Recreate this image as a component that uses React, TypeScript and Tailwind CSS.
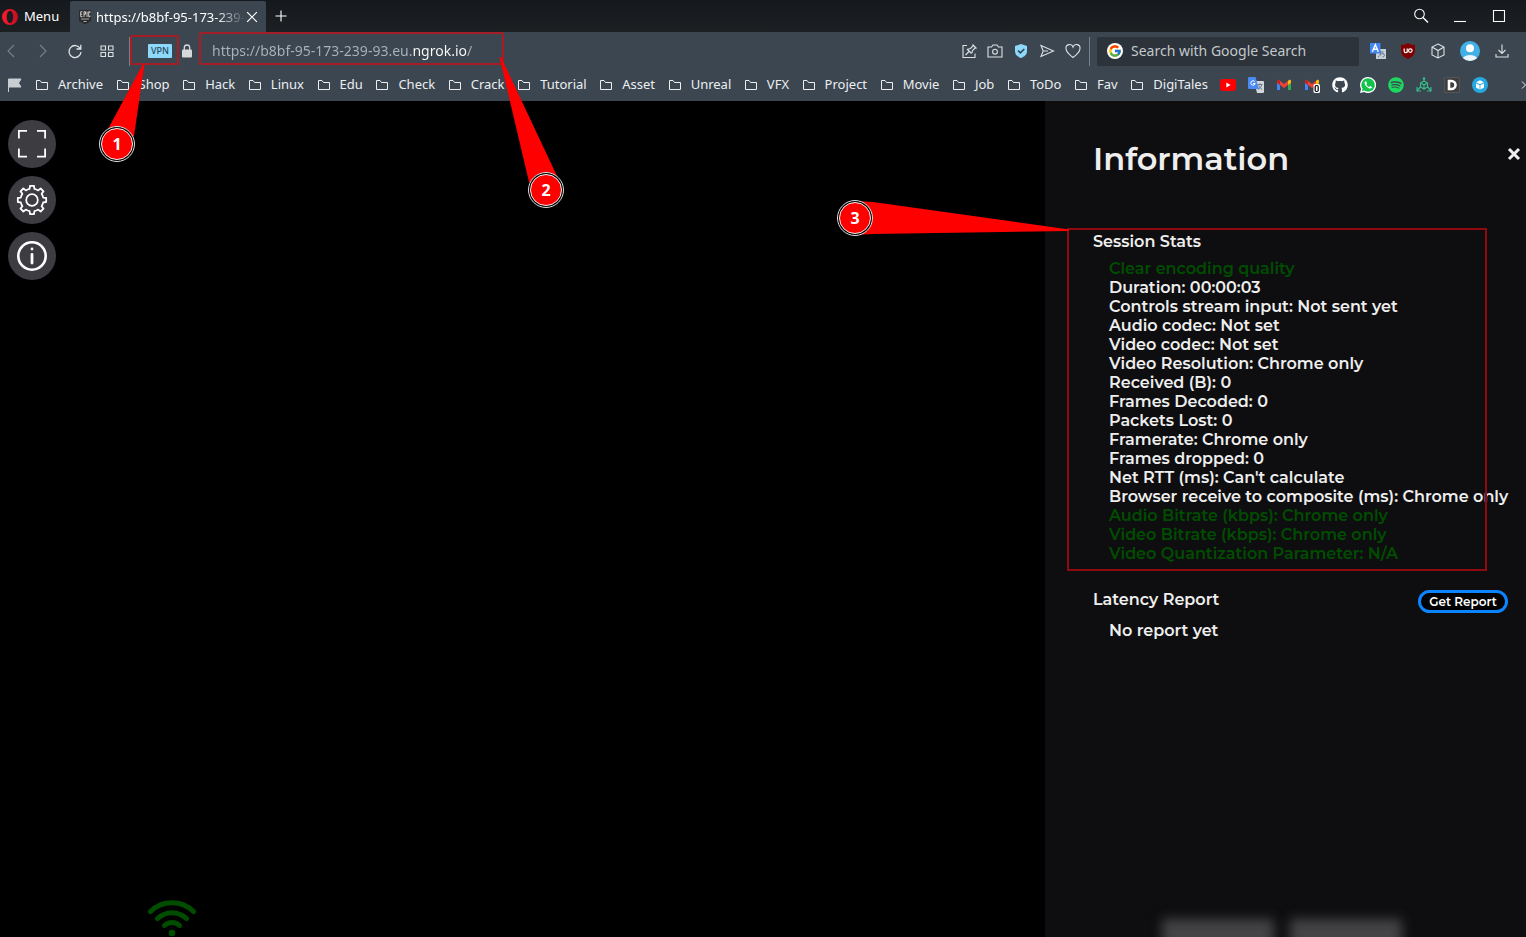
import type { ReactNode } from "react";
import { FcGoogle } from "react-icons/fc";
import { FaGithub, FaSpotify, FaWhatsapp } from "react-icons/fa";

const folders = [
  "Archive", "Shop", "Hack", "Linux", "Edu", "Check", "Crack", "Tutorial", "Asset",
  "Unreal", "VFX", "Project", "Movie", "Job", "ToDo", "Fav", "DigiTales",
];

const stats = [
  { text: "Clear encoding quality", good: true },
  { text: "Duration: 00:00:03" },
  { text: "Controls stream input: Not sent yet" },
  { text: "Audio codec: Not set" },
  { text: "Video codec: Not set" },
  { text: "Video Resolution: Chrome only" },
  { text: "Received (B): 0" },
  { text: "Frames Decoded: 0" },
  { text: "Packets Lost: 0" },
  { text: "Framerate: Chrome only" },
  { text: "Frames dropped: 0" },
  { text: "Net RTT (ms): Can't calculate" },
  { text: "Browser receive to composite (ms): Chrome only" },
  { text: "Audio Bitrate (kbps): Chrome only", good: true },
  { text: "Video Bitrate (kbps): Chrome only", good: true },
  { text: "Video Quantization Parameter: N/A", good: true },
];

function Icon({ children, className = "size-4" }: { children: ReactNode; className?: string }) {
  return (
    <svg viewBox="0 0 16 16" fill="none" stroke="currentColor" strokeWidth="1.1" className={className} aria-hidden="true">
      {children}
    </svg>
  );
}

function IconButton({ label, children, className = "size-4" }: { label: string; children: ReactNode; className?: string }) {
  return (
    <button type="button" aria-label={label} className={`flex shrink-0 items-center justify-center ${className}`}>
      {children}
    </button>
  );
}

function Gmail({ badge = false }: { badge?: boolean }) {
  return (
    <svg viewBox="0 0 16 16" className="size-4" aria-hidden="true">
      <path d="M1 4v9h3V7z" fill="#4285f4" />
      <path d="M15 4v9h-3V7z" fill="#34a853" />
      <path d="M1 3.8 2.6 2.8 8 7l5.400-4.200L15 3.800V5.700L8 11 1 5.700z" fill="#ea4335" />
      <path d="M12 4 13.400 2.800Q15 2.500 15 4.200V5.700L12 8z" fill="#fbbc04" />
      <path d="M4 4 2.600 2.800Q1 2.500 1 4.200V5.700L4 8z" fill="#c5221f" />
      {badge && (
        <g>
          <rect x="9.500" y="7" width="6.500" height="9" rx="1.500" fill="#fff" />
          <rect x="11.200" y="8.500" width="3" height="6" rx="1.200" fill="none" stroke="#000" strokeWidth="1.200" />
        </g>
      )}
    </svg>
  );
}

const shortcuts: { label: string; icon: ReactNode }[] = [
  {
    label: "YouTube",
    icon: (
      <svg viewBox="0 0 16 16" className="size-4" aria-hidden="true">
        <rect y="2" width="16" height="12" rx="3" fill="#f00" />
        <path d="m6.300 5.400 4.300 2.600-4.300 2.600z" fill="#fff" />
      </svg>
    ),
  },
  {
    label: "Translate",
    icon: (
      <svg viewBox="0 0 16 16" className="size-4" aria-hidden="true">
        <path d="M6 4h9a1 1 0 0 1 1 1v10a1 1 0 0 1-1 1H9z" fill="#d3d6da" />
        <path d="M9.500 7.500h5M12 6.300v1.200M13.800 7.500c-.5 2.300-2 4-3.500 5M10.800 8.500c.5 1.800 2 3.200 3.600 4" stroke="#687886" fill="none" />
        <path d="M1 0h6.500L11 12H1a1 1 0 0 1-1-1V1a1 1 0 0 1 1-1z" fill="#4a8af4" />
        <path d="M6.700 4.500a2.200 2.200 0 1 0 .5 2H5" stroke="#fff" fill="none" />
      </svg>
    ),
  },
  { label: "Gmail", icon: <Gmail /> },
  { label: "Gmail inbox", icon: <Gmail badge /> },
  { label: "GitHub", icon: <FaGithub className="size-4 text-white" /> },
  {
    label: "WhatsApp",
    icon: (
      <svg viewBox="0 0 16 16" className="size-4" aria-hidden="true">
        <path d="M8 0a8 8 0 1 1-3.800 15L0 16l1.100-4A8 8 0 0 1 8 0z" fill="#fff" />
        <path d="M8 1.300A6.700 6.700 0 1 1 4.400 13.600L1.900 14.200l.7-2.400A6.700 6.700 0 0 1 8 1.300z" fill="#12c24a" />
        <path d="M5.500 4.200c-1.800 1-.6 3.700 1 5.300s4.200 3 5.400 1.300l.1-.9-1.900-1-1 1.100c-1.300-.5-2.200-1.400-2.800-2.600l.7-.9-.8-2.200z" fill="#fff" />
      </svg>
    ),
  },
  { label: "Spotify", icon: <FaSpotify className="size-4 text-[#1ed760]" /> },
  {
    label: "Network",
    icon: (
      <Icon className="size-4 text-[#35c08d]">
        <path d="m8 4 3.500 2v4L8 12l-3.500-2V6zM4.500 6 8 8l3.500-2M8 8v4M8 4V1.500M4.500 10 1.500 13M11.500 10l3 3M1 10v4h4M15 10v4h-4" />
        <circle cx="8" cy="1.500" r=".8" fill="currentColor" />
      </Icon>
    ),
  },
  {
    label: "Dictionary",
    icon: (
      <svg viewBox="0 0 16 16" className="size-4" aria-hidden="true">
        <rect width="16" height="16" rx="1.500" fill="#555" />
        <rect x="1" y="1" width="14" height="14" fill="#3f3f3f" />
        <path d="M5 4h2.500a4 4 0 0 1 0 8H5z" fill="none" stroke="#fff" strokeWidth="2.600" />
      </svg>
    ),
  },
  {
    label: "Cube",
    icon: (
      <svg viewBox="0 0 16 16" className="size-4" aria-hidden="true">
        <circle cx="8" cy="8" r="8" fill="#27a9e0" />
        <path d="m8 3.300 3.800 2L8 7.300l-3.800-2zM4 6.200l3.600 2v4.300L4 10.500zM12 6.200l-3.600 2v4.300l3.600-2z" fill="#fff" />
      </svg>
    ),
  },
];

function Marker({ label, className }: { label: string; className: string }) {
  return (
    <span className={`absolute flex size-9 items-center justify-center rounded-full border border-[#ddd] bg-black p-px ${className}`}>
      <span className="flex size-full items-center justify-center rounded-full border border-[#eee] bg-[#f00] text-base font-bold text-white">
        {label}
      </span>
    </span>
  );
}

function TabStrip() {
  return (
    <header className="flex h-8 items-end bg-linear-to-b from-[#15181c] to-[#1d2023] text-[13px] text-white">
      <button type="button" className="flex h-8 w-[70px] shrink-0 items-center gap-1.5 pt-0.5 pl-0.5">
        <svg viewBox="0 0 16 16" className="size-4 shrink-0" aria-hidden="true">
          <defs>
            <linearGradient id="ring" x1="0" x2="1">
              <stop offset="0" stopColor="#ff1b2d" />
              <stop offset="1" stopColor="#c00d20" />
            </linearGradient>
          </defs>
          <path fillRule="evenodd" d="M8 0a8 8 0 1 0 0 16A8 8 0 0 0 8 0zM8 2c2 0 3.200 2.700 3.200 6S10 14 8 14s-3.200-2.700-3.200-6S6 2 8 2z" fill="url(#ring)" />
        </svg>
        Menu
      </button>
      <div className="flex h-[31px] w-[196px] shrink-0 items-center rounded-t-xs bg-[#3b4650] px-2">
        <svg viewBox="0 0 14 16" className="h-4 w-3.5 shrink-0" aria-hidden="true">
          <path d="M1 1h12v11l-6 3.500L1 12z" fill="#2b2b2b" />
          <path d="M4.500 2.700H2.700v5h1.800M2.700 5.200h1.500M6 8V2.700h1.500v2.500H6M9 2.500V8M12 4V2.700h-1.300v5H12V6.500" stroke="#ddd" strokeWidth=".9" fill="none" />
          <path d="M3 10h8M5.500 12.500h3" stroke="#aaa" />
        </svg>
        <span className="ml-1 flex-1 mask-r-from-80% mask-r-to-100% pt-0.5 whitespace-nowrap">
          https://b8bf-95-173-239-
        </span>
        <IconButton label="Close tab" className="size-3">
          <Icon className="size-3"><path d="m1.500 1.500 13 13m0-13-13 13" strokeWidth="1.600" /></Icon>
        </IconButton>
      </div>
      <IconButton label="New tab" className="ml-[7px] h-8 w-4">
        <Icon className="size-4"><path d="M8 2.500v11M2.500 8h11" /></Icon>
      </IconButton>
      <div className="ml-auto flex h-8 items-center gap-[23px] pr-[19px]">
        <IconButton label="Search tabs">
          <Icon className="size-4"><circle cx="6.500" cy="6" r="4.800" /><path d="m10 9.500 5 5" strokeWidth="1.400" /></Icon>
        </IconButton>
        <IconButton label="Minimize">
          <Icon><path d="M2 13.500h12" /></Icon>
        </IconButton>
        <IconButton label="Maximize">
          <Icon><path d="M2.500 2.500h11v11h-11z" /></Icon>
        </IconButton>
      </div>
    </header>
  );
}

function AddressRow() {
  return (
    <div className="flex h-9 items-center bg-[#3b4650] pt-0.5 pr-4 pl-[3px] text-[#dde1e4]">
      <div className="flex items-center gap-4">
        <IconButton label="Back" className="size-4 text-[#77828b]"><Icon><path d="M11 2 5 8l6 6" /></Icon></IconButton>
        <IconButton label="Forward" className="size-4 text-[#77828b]"><Icon><path d="m5 2 6 6-6 6" /></Icon></IconButton>
        <IconButton label="Reload">
          <Icon><path d="M13.200 5.500A6 6 0 1 0 14 9M13.800 1.800v4.200H9.500" strokeWidth="1.300" /></Icon>
        </IconButton>
        <IconButton label="Workspaces">
          <Icon><path d="M2 3h4.500v4H2zM9.500 3H14v4H9.500zM2 9.500h4.500v4H2zM9.500 9.500H14v4H9.500z" /></Icon>
        </IconButton>
      </div>
      <div className="ml-3.5 h-[29px] w-px bg-[#76818a]" />
      <button type="button" className="ml-[18px] h-3.5 w-6 shrink-0 rounded-[1px] bg-[#8ed8fb] text-[9px] leading-[14px] font-medium text-[#26485a]">
        VPN
      </button>
      <svg viewBox="0 0 12 14" className="ml-[9px] h-3.5 w-3 shrink-0" aria-label="Secure" role="img">
        <path d="M3.300 6V3.700a2.700 2.700 0 0 1 5.400 0V6" fill="none" stroke="#d5d9dc" strokeWidth="1.300" />
        <rect x="1" y="5.500" width="10" height="8" rx="1" fill="#d5d9dc" />
      </svg>
      <input
        type="text"
        aria-label="Address"
        defaultValue="https://b8bf-95-173-239-93.eu.ngrok.io/"
        className="ml-[19px] min-w-0 flex-1 bg-[linear-gradient(90deg,#a9b3bb_201px,#ffffff_201px,#ffffff_255px,#a9b3bb_255px)] bg-clip-text text-sm text-transparent outline-none"
      />
      <div className="flex items-center gap-2.5">
        <IconButton label="Easy setup">
          <Icon><path d="M6 2.500H2v12h12v-4M4.500 12 8 8.500M6 6l4.500 4.500M7 6.200l2.500-.7 2.800-3L14.500 4.700l-3 2.800-.7 2.500M11.500 1.500l4 4" /></Icon>
        </IconButton>
        <IconButton label="Snapshot">
          <Icon><path d="M1 4h3.500L6 2h4l1.500 2H15v10H1z" /><circle cx="8" cy="8.700" r="2.400" /></Icon>
        </IconButton>
        <IconButton label="Protection">
          <svg viewBox="0 0 16 16" className="size-4" aria-hidden="true">
            <path d="m8 1 6 2v5c0 3.500-2.500 5.700-6 7-3.500-1.300-6-3.500-6-7V3z" fill="#8ed8fb" />
            <path d="m5 7.500 2.300 2.300L11.300 6" fill="none" stroke="#2c4656" strokeWidth="1.600" />
          </svg>
        </IconButton>
        <IconButton label="Send"><Icon><path d="m2 2.500 12.500 5.500L2 13.500 4.200 8zM4.200 8H9" /></Icon></IconButton>
        <IconButton label="Add to favourites">
          <Icon><path d="M8 14.500C4 11.500 1 9 1 5.500A3.600 3.600 0 0 1 8 4a3.600 3.600 0 0 1 7 1.500C15 9 12 11.500 8 14.500z" /></Icon>
        </IconButton>
      </div>
      <div className="ml-2 h-[29px] w-px bg-[#76818a]" />
      <label className="ml-[7px] flex h-[29px] w-[262px] items-center gap-2 rounded-xs bg-[#2c333a] px-2.5">
        <span className="flex size-4 shrink-0 items-center justify-center rounded-full bg-white">
          <FcGoogle className="size-3.5" />
        </span>
        <input
          type="search"
          aria-label="Search"
          placeholder="Search with Google Search"
          className="min-w-0 flex-1 bg-transparent text-sm outline-none placeholder:text-[#c3c8cc]"
        />
      </label>
      <div className="ml-[11px] flex items-center gap-3.5">
        <IconButton label="Translate page">
          <svg viewBox="0 0 16 16" className="size-4" aria-hidden="true">
            <path d="M6 6h10v10H6z" fill="#c4cfd8" />
            <path d="M8 9h5.500M10.500 8v2c0 2-1 3.500-2.500 4M10.500 11.500c1.500-1.500 4-1 4 .8 0 1-.8 1.500-2 1.500" stroke="#66798a" fill="none" />
            <path d="M0 0h10.500v10.500H0z" fill="#4285f4" />
            <path d="m2.300 8.700 3-7 3 7M3.500 6.300h3.600" stroke="#fff" strokeWidth="1.400" fill="none" />
          </svg>
        </IconButton>
        <IconButton label="Ad blocker">
          <svg viewBox="0 0 16 16" className="size-4" aria-hidden="true">
            <path d="M8 0c2 1.300 4 2 7 2v5c0 5-3 7-7 9-4-2-7-4-7-9V2c3 0 5-.7 7-2z" fill="#800000" />
            <path d="M4.200 5.500v2.700a1.500 1.500 0 0 0 3 0V5.500v4.200" fill="none" stroke="#fff" strokeWidth="1.200" />
            <circle cx="10.300" cy="7.600" r="1.800" fill="none" stroke="#fff" strokeWidth="1.200" />
          </svg>
        </IconButton>
        <IconButton label="Extensions">
          <Icon><path d="m8 1 6 3v8l-6 3-6-3V4zM2 4l6 3.500L14 4M8 7.500V15" /></Icon>
        </IconButton>
        <IconButton label="Profile" className="size-5">
          <svg viewBox="0 0 20 20" className="size-5" aria-hidden="true">
            <circle cx="10" cy="10" r="10" fill="#42b0e6" />
            <circle cx="10" cy="7.200" r="4" fill="#fff" />
            <path d="M2.800 16.900a8.500 6 0 0 1 14.400 0 10 10 0 0 1-14.400 0z" fill="#eef5fb" />
          </svg>
        </IconButton>
        <IconButton label="Downloads" className="size-4">
          <Icon><path d="M8 1.500V10M4.500 7 8 10.500 11.500 7M2 11v3h12v-3" /></Icon>
        </IconButton>
      </div>
    </div>
  );
}

function Bookmarks() {
  return (
    <nav aria-label="Bookmarks" className="flex h-[33px] items-center overflow-hidden bg-[#3b4650] pl-2 text-[13px] whitespace-nowrap text-[#eceef0]">
      <svg viewBox="0 0 14 14" className="size-3.5 shrink-0" aria-hidden="true">
        <path d="M.5 1v13M.5 1H13l-2.500 4L13 9H.5z" fill="#c9ced2" stroke="#c9ced2" />
      </svg>
      <ul className="ml-3.5 flex w-[1172px] shrink-0 justify-between">
        {folders.map((name) => (
          <li key={name}>
            <a href="#" className="flex items-center gap-2.5">
              <svg viewBox="0 0 12 12" className="size-3" fill="none" stroke="currentColor" aria-hidden="true">
                <path d="M.5 10.500v-9H4L5.500 3.500h6v7z" />
              </svg>
              {name}
            </a>
          </li>
        ))}
      </ul>
      <ul className="ml-3 flex shrink-0 gap-3">
        {shortcuts.map(({ label, icon }) => (
          <li key={label}><a href="#" aria-label={label} className="block size-4">{icon}</a></li>
        ))}
      </ul>
      <IconButton label="More bookmarks" className="ml-auto h-4 w-1.5">
        <svg viewBox="0 0 6 10" className="h-2.5 w-1.5" fill="none" stroke="currentColor" aria-hidden="true">
          <path d="m2 1.500 3.500 3.500L2 8.500" />
        </svg>
      </IconButton>
    </nav>
  );
}

function StageButton({ label, children }: { label: string; children: ReactNode }) {
  return (
    <button type="button" aria-label={label} className="flex size-12 items-center justify-center rounded-full bg-[#3d3c40] text-white">
      <svg viewBox="0 0 32 32" className="size-8" fill="none" stroke="currentColor" strokeWidth="1.800" aria-hidden="true">
        {children}
      </svg>
    </button>
  );
}

function Stage() {
  return (
    <main className="flex min-w-0 flex-1 flex-col bg-black px-2 pt-[19px]">
      <div className="flex flex-col gap-2">
        <StageButton label="Fullscreen">
          <path d="M2.900 10.500V2.900H11M21 2.900h8.100V10.500M29.100 20.500v8.100H21M11 28.600H2.900V20.500" />
        </StageButton>
        <StageButton label="Settings">
          <circle cx="16" cy="16" r="5.800" />
          <path
            strokeLinejoin="round"
            d="M13.600 4.800 14 1.800h4l.4 3a11.400 11.400 0 0 1 3.800 1.600l2.400-1.900 2.900 2.900-1.900 2.400a11.400 11.400 0 0 1 1.600 3.800l3 .4v4l-3 .4a11.400 11.400 0 0 1-1.600 3.800l1.900 2.400-2.900 2.900-2.400-1.900a11.400 11.400 0 0 1-3.800 1.600l-.4 3h-4l-.4-3a11.400 11.400 0 0 1-3.800-1.600l-2.400 1.900-2.900-2.900 1.900-2.400a11.400 11.400 0 0 1-1.600-3.800l-3-.4v-4l3-.4a11.400 11.400 0 0 1 1.600-3.800L4.500 7.400l2.900-2.900 2.400 1.900a11.400 11.400 0 0 1 3.800-1.600z"
          />
        </StageButton>
        <StageButton label="Information">
          <circle cx="16" cy="16" r="13.700" strokeWidth="2.600" />
          <path d="M16 14.500v8.500" strokeWidth="2.800" strokeLinecap="round" />
          <circle cx="16" cy="9" r="1.400" fill="currentColor" stroke="none" />
        </StageButton>
      </div>
      <svg viewBox="0 0 48 37" className="mt-auto ml-[140px] h-[37px] w-12 shrink-0" fill="none" stroke="#004d00" strokeWidth="5" strokeLinecap="round" role="img" aria-label="Connection quality">
        <path d="M2.500 11.500a31 31 0 0 1 43 0M9.500 18.500a21 21 0 0 1 29 0M16.500 25.500a11 11 0 0 1 15 0" />
        <circle cx="24" cy="33" r="3.300" fill="#004d00" stroke="none" />
      </svg>
    </main>
  );
}

function InfoPanel() {
  return (
    <aside className="relative flex w-[481px] shrink-0 flex-col bg-[#0e0e10] pr-[18px] pl-12 font-['Montserrat','Inter',sans-serif] text-base leading-[19px] font-semibold text-[#eee]">
      <h1 className="mt-9 text-[32px] leading-11">Information</h1>
      <button type="button" aria-label="Close" className="absolute top-[45px] right-1 flex size-4 items-center justify-center">
        <Icon className="size-4"><path d="m3 3 10 10m0-10L3 13" strokeWidth="3" /></Icon>
      </button>
      <section className="relative mt-[51px]">
        <h2>Session Stats</h2>
        <ul className="mt-2 pl-4 whitespace-nowrap">
          {stats.map(({ text, good }) => (
            <li key={text} className={good ? "text-[#004d00]" : "text-[#eee]"}>{text}</li>
          ))}
        </ul>
        <div className="pointer-events-none absolute -top-1 right-[21px] -bottom-2 -left-[26px] border-2 border-[#8e0a10]" />
        <svg viewBox="0 0 214 36" className="pointer-events-none absolute -top-8 -left-[238px] h-9 w-[214px]" aria-hidden="true">
          <path d="M0 1 18 2 214 29.500V31L18 34 0 35z" fill="#f00" />
        </svg>
        <Marker label="3" className="-top-8 -left-64 font-['Noto_Sans',sans-serif]" />
      </section>
      <section className="mt-[27px]">
        <div className="flex items-start justify-between">
          <h2>Latency Report</h2>
          <button type="button" className="h-[23px] w-[90px] rounded-full border-3 border-[#0a84ff] bg-black text-xs leading-4 font-semibold whitespace-nowrap text-white">
            Get Report
          </button>
        </div>
        <p className="mt-2 pl-4">No report yet</p>
      </section>
      <div aria-hidden="true" className="absolute inset-x-0 bottom-0 flex h-12 items-end justify-center gap-4 overflow-hidden pr-2">
        <span className="-mb-6 h-[42px] w-28 bg-[#444446] blur-[6px]" />
        <span className="-mb-6 h-[42px] w-28 bg-[#444446] blur-[6px]" />
      </div>
    </aside>
  );
}

export default function App() {
  return (
    <div className="relative flex h-screen flex-col overflow-hidden bg-black font-['Noto_Sans',sans-serif]">
      <TabStrip />
      <AddressRow />
      <Bookmarks />
      <div className="flex min-h-0 flex-1">
        <Stage />
        <InfoPanel />
      </div>
      <div className="pointer-events-none absolute top-0 left-0">
        <div className="absolute top-[35px] left-[130px] h-[30px] w-[49px] rounded-xs border-2 border-[#a51e26]" />
        <div className="absolute top-8 left-[199px] h-[33px] w-[305px] rounded-xs border-2 border-[#a51e26]" />
        <svg viewBox="0 0 580 220" className="absolute top-0 left-0 h-[220px] w-[580px] max-w-none" aria-hidden="true">
          <path d="M143 64h1.500L134 136l-17 8-9-15zM499.500 57h1.500l56 119-11 14-17-8z" fill="#f00" />
        </svg>
        <Marker label="1" className="top-[126px] left-[99px]" />
        <Marker label="2" className="top-[172px] left-[528px]" />
      </div>
    </div>
  );
}
